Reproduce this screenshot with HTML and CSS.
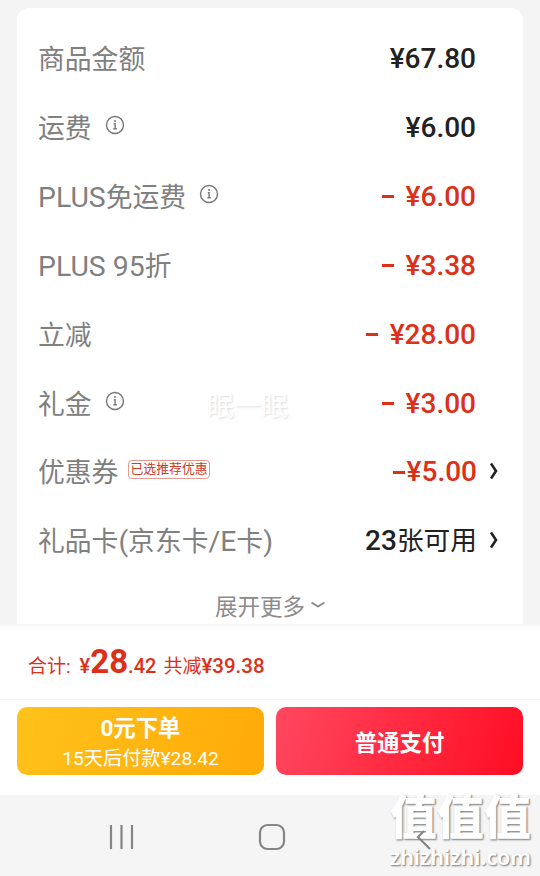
FILE: index.html
```html
<!DOCTYPE html>
<html lang="zh-CN">
<head>
  <meta charset="UTF-8" />
  <meta name="viewport" content="width=device-width, initial-scale=1.0"/>
  <title>确认订单</title>
  <link rel="stylesheet" href="styles.css">
</head>
<body>
  <main class="content">
    <div class="card">
      <div class="row">
        <span class="label">商品金额</span>
        <span class="amount">¥67.80</span>
      </div>
      <div class="row">
        <span class="label">运费</span>
        <svg class="info" viewBox="0 0 20 20"><circle cx="10" cy="10" r="8.5"/><path d="M8.8 8.7h1.3v5M8.4 13.7h3.4"/><circle class="dot" cx="10" cy="6" r="1"/></svg>
        <span class="amount">¥6.00</span>
      </div>
      <div class="row">
        <span class="label"><span class="latin">PLUS</span>免运费</span>
        <svg class="info" viewBox="0 0 20 20"><circle cx="10" cy="10" r="8.5"/><path d="M8.8 8.7h1.3v5M8.4 13.7h3.4"/><circle class="dot" cx="10" cy="6" r="1"/></svg>
        <span class="amount red"><i class="minus"></i>¥6.00</span>
      </div>
      <div class="row">
        <span class="label"><span class="latin">PLUS 95</span>折</span>
        <span class="amount red"><i class="minus"></i>¥3.38</span>
      </div>
      <div class="row">
        <span class="label">立减</span>
        <span class="amount red"><i class="minus"></i>¥28.00</span>
      </div>
      <div class="row">
        <span class="label">礼金</span>
        <svg class="info" viewBox="0 0 20 20"><circle cx="10" cy="10" r="8.5"/><path d="M8.8 8.7h1.3v5M8.4 13.7h3.4"/><circle class="dot" cx="10" cy="6" r="1"/></svg>
        <span class="amount red"><i class="minus"></i>¥3.00</span>
      </div>
      <div class="row link">
        <span class="label">优惠券</span>
        <span class="tag">已选推荐优惠</span>
        <span class="amount red"><i class="minus tight"></i>¥5.00</span>
        <svg class="arrow" viewBox="0 0 10 20"><path d="M2 2.5 7 10 2 17.5"/></svg>
      </div>
      <div class="row link">
        <span class="label">礼品卡<span class="latin">(</span>京东卡<span class="latin">/E</span>卡<span class="latin">)</span></span>
        <span class="amount">23<span class="unit">张可用</span></span>
        <svg class="arrow" viewBox="0 0 10 20"><path d="M2 2.5 7 10 2 17.5"/></svg>
      </div>
      <div class="more">
        展开更多
        <svg class="down" viewBox="0 0 14 8"><path d="M.5 1.500 7 5.500l6.500-4"/></svg>
      </div>
      <span class="user-mark">眠一眠</span>
    </div>
  </main>

  <footer class="checkout">
    <div class="total">
      <span class="total-label">合计:</span>
      <span class="yen">¥</span><span class="big">28</span><span class="cents">.42</span>
      <span class="saved">共减<b>¥39.38</b></span>
    </div>
    <div class="buttons">
      <button class="btn yellow">
        <span class="btn-title">0元下单</span>
        <span class="btn-sub">15天后付款¥28.42</span>
      </button>
      <button class="btn pay"><span class="btn-title">普通支付</span></button>
    </div>
  </footer>

  <nav class="navbar">
    <svg class="nav-icon" viewBox="0 0 30 30"><path d="M5 3v24M15.500 3v24M26 3v24"/></svg>
    <svg class="nav-icon" viewBox="0 0 30 30"><rect x="3" y="3" width="24" height="24" rx="7.500"/></svg>
    <div class="site-mark">
      <span class="site-name">值值值</span>
      <span class="site-url">zhizhizhi.com</span>
    </div>
    <svg class="nav-icon back" viewBox="0 0 30 30"><path d="M16 9 10 15l12 12"/></svg>
  </nav>
</body>
</html>
```
FILE: styles.css
```css
* {
  box-sizing: border-box;
}

body {
  margin: 0;
  height: 876px;
  display: flex;
  flex-direction: column;
  overflow: hidden;
  background: #f4f4f4;
  font-family: Roboto, "Noto Sans CJK SC", sans-serif;
  color: #222;
}

.content {
  height: 624px;
  padding: 8px 17px 0;
  overflow: hidden;
}

.card {
  position: relative;
  height: 630px;
  padding: 16px 47px 0 21px;
  background: #fff;
  border-radius: 12px;
}

.row {
  display: flex;
  align-items: center;
  height: 69px;
}

.label {
  padding-top: 2px;
  font-size: 26.8px;
  line-height: 40px;
  color: #808080;
  white-space: nowrap;
}

.latin {
  font-size: 28.4px;
}

.info {
  width: 20px;
  height: 20px;
  margin: 0 0 5px 13px;
  fill: none;
  stroke: #777;
  stroke-width: 1.4;
}

.info .dot {
  fill: #777;
  stroke: none;
}

.amount {
  display: flex;
  align-items: center;
  margin-left: auto;
  font-size: 28px;
  font-weight: 500;
  line-height: 40px;
  white-space: nowrap;
}

.red {
  color: #dc3018;
}

.minus {
  width: 12px;
  height: 3px;
  margin-right: 12px;
  background: currentColor;
}

.minus.tight {
  margin-right: 2px;
}

.unit {
  font-size: 26.7px;
  font-weight: 400;
}

.link {
  margin-right: -26px;
  padding-bottom: 1px;
}

.arrow {
  width: 10px;
  height: 20px;
  margin: 0 3px 3px 12px;
  fill: none;
  stroke: #222;
  stroke-width: 2.6;
}

.tag {
  height: 19px;
  margin: 0 0 5px 10px;
  padding: 0 1px;
  border: 1px solid #e2998e;
  border-radius: 4px;
  color: #d03a26;
  font-size: 12.9px;
  line-height: 16px;
}

.more {
  display: flex;
  align-items: center;
  justify-content: center;
  gap: 6px;
  margin-right: -26px;
  padding-top: 13px;
  color: #8c8c8c;
  font-size: 22.5px;
  line-height: 36px;
}

.down {
  width: 14px;
  height: 8px;
  margin-bottom: 4px;
  fill: none;
  stroke: #888;
  stroke-width: 2;
  stroke-linejoin: round;
}

/* faint uploader name over the list */
.user-mark {
  position: absolute;
  left: 190px;
  top: 379px;
  color: #fff;
  font-size: 27px;
  line-height: 40px;
  text-shadow: 1px 1px 2px #ddd;
}

.checkout {
  height: 171px;
  background: #fff;
  border-top: 2px solid #f8f8f8;
}

.total {
  display: flex;
  align-items: baseline;
  height: 74px;
  padding: 12px 28px 0;
  border-bottom: 1px solid #f3f3f3;
  color: #dc3018;
  font-size: 19px;
  font-weight: 500;
  line-height: 48px;
}

.total-label {
  margin-right: 9px;
  font-weight: 400;
}

.yen {
  font-size: 20px;
}

.big {
  font-size: 33px;
  font-weight: 700;
}

.cents {
  font-size: 20px;
}

.saved {
  margin-left: 7px;
  font-weight: 400;
}

.saved b {
  font-size: 20.5px;
  font-weight: 500;
}

.buttons {
  display: flex;
  gap: 12px;
  padding: 7px 17px 0;
}

.btn {
  flex: 1;
  display: flex;
  flex-direction: column;
  align-items: center;
  justify-content: center;
  height: 68px;
  padding: 3px 0 0;
  border: none;
  border-radius: 10px;
  color: #fff;
  font-family: inherit;
}

.yellow {
  background: linear-gradient(110deg, #ffc21b, #ffaa08);
}

.pay {
  background: linear-gradient(110deg, #ff4860, #ff0d22);
}

.btn-title {
  font-size: 22.4px;
  font-weight: 700;
  line-height: 32px;
}

.btn-sub {
  font-size: 19.2px;
  font-weight: 400;
  line-height: 30px;
}

.navbar {
  position: relative;
  flex: 1;
  display: flex;
  align-items: center;
  justify-content: space-between;
  padding: 2px 102px 0 106px;
  background: #f5f5f5;
}

.nav-icon {
  width: 30px;
  height: 30px;
  fill: none;
  stroke: #858585;
  stroke-width: 2.2;
}

.back {
  position: relative;
}

/* site stamp shares the corner with the back key */
.site-mark {
  position: absolute;
  right: 9px;
  top: -5px;
  display: flex;
  flex-direction: column;
  align-items: center;
  color: #fff;
  text-shadow: 1px 1px 2px #888, 1px 1px 1px #bbb;
}

.site-name {
  font-size: 47px;
  font-weight: 900;
  line-height: 56px;
}

.site-url {
  font-family: "Noto Sans", sans-serif;
  font-size: 21.5px;
  font-weight: 600;
  line-height: 22px;
}
```
